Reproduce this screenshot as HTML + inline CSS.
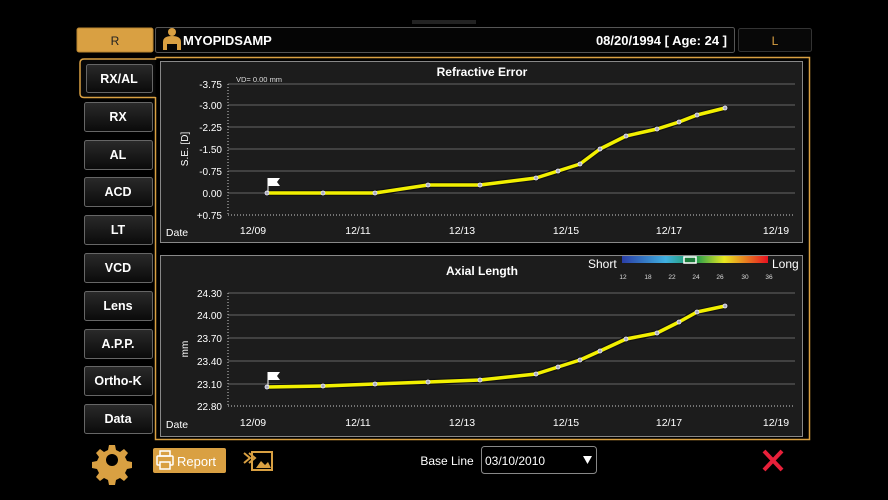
<!DOCTYPE html>
<html><head><meta charset="utf-8"><style>
html,body{margin:0;padding:0;background:#000;width:888px;height:500px;overflow:hidden}
svg{display:block}
text{font-family:"Liberation Sans",sans-serif}
</style></head><body>
<svg width="888" height="500" viewBox="0 0 888 500" xmlns="http://www.w3.org/2000/svg">
<defs>
<linearGradient id="btn" x1="0" y1="0" x2="0" y2="1"><stop offset="0" stop-color="#2a2a2a"/><stop offset="1" stop-color="#0a0a0a"/></linearGradient>
<linearGradient id="cb" x1="0" y1="0" x2="1" y2="0"><stop offset="0" stop-color="#2a3ea8"/><stop offset="0.3" stop-color="#3fb0e0"/><stop offset="0.5" stop-color="#1a9a50"/><stop offset="0.7" stop-color="#e8e820"/><stop offset="1" stop-color="#e81020"/></linearGradient>
</defs>
<rect width="888" height="500" fill="#000"/>
<rect x="412" y="20" width="64" height="4" fill="#222"/>
<!-- R -->
<rect x="77" y="28" width="76" height="24" rx="2" fill="#d9a042" stroke="#b88530"/>
<text x="115" y="45" font-size="12" text-anchor="middle" fill="#222">R</text>
<!-- header -->
<rect x="155.5" y="27.5" width="579" height="25" rx="2" fill="#050505" stroke="#555"/>
<circle cx="172" cy="32" r="4" fill="#d9a042"/>
<path d="M163 50 v-8 q0-6 9-6 q9 0 9 6 v8 h-4 v-6 h-10 v6z" fill="#d9a042"/>
<text x="183" y="45" font-size="13" font-weight="bold" fill="#fff">MYOPIDSAMP</text>
<text x="727" y="45" font-size="13" font-weight="bold" fill="#fff" text-anchor="end">08/20/1994 [ Age: 24 ]</text>
<rect x="738.5" y="28.5" width="73" height="23" rx="2" fill="#080808" stroke="#333"/>
<text x="775" y="45" font-size="12" text-anchor="middle" fill="#d9a042">L</text>
<!-- main orange frame -->
<path d="M155.5 57.5 H809.5 V439.5 H155.5 V97 M155.5 57.5 V60" fill="none" stroke="#d9a042" stroke-width="1.5"/>
<path d="M155.5 97.5 H84 q-4 0-4-4 V63 q0-4 4-4 H155.5" fill="#080808" stroke="#d9a042" stroke-width="1.5"/>
<rect x="86.5" y="64.5" width="66" height="28" rx="2" fill="url(#btn)" stroke="#666"/>
<text x="119" y="83" font-size="12.5" font-weight="bold" text-anchor="middle" fill="#fff">RX/AL</text>
<g font-size="12.5" font-weight="bold" text-anchor="middle" fill="#fff">
<rect x="84.5" y="102.5" width="68" height="29" rx="2" fill="url(#btn)" stroke="#666"/><text x="118" y="121">RX</text>
<rect x="84.5" y="140.5" width="68" height="29" rx="2" fill="url(#btn)" stroke="#666"/><text x="118" y="159">AL</text>
<rect x="84.5" y="177.5" width="68" height="29" rx="2" fill="url(#btn)" stroke="#666"/><text x="118" y="196">ACD</text>
<rect x="84.5" y="215.5" width="68" height="29" rx="2" fill="url(#btn)" stroke="#666"/><text x="118" y="234">LT</text>
<rect x="84.5" y="253.5" width="68" height="29" rx="2" fill="url(#btn)" stroke="#666"/><text x="118" y="272">VCD</text>
<rect x="84.5" y="291.5" width="68" height="29" rx="2" fill="url(#btn)" stroke="#666"/><text x="118" y="310">Lens</text>
<rect x="84.5" y="329.5" width="68" height="29" rx="2" fill="url(#btn)" stroke="#666"/><text x="118" y="348">A.P.P.</text>
<rect x="84.5" y="366.5" width="68" height="29" rx="2" fill="url(#btn)" stroke="#666"/><text x="118" y="385">Ortho-K</text>
<rect x="84.5" y="404.5" width="68" height="29" rx="2" fill="url(#btn)" stroke="#666"/><text x="118" y="423">Data</text>
</g>
<!-- top chart -->
<rect x="160.5" y="61.5" width="642" height="181" fill="#1c1c1c" stroke="#888"/>
<text x="482" y="76" font-size="12" font-weight="bold" text-anchor="middle" fill="#fff">Refractive Error</text>
<text x="236" y="82" font-size="7.5" fill="#ddd">VD= 0.00 mm</text>
<g stroke="#666" stroke-width="1">
<line x1="228" y1="84" x2="795" y2="84"/><line x1="228" y1="105" x2="795" y2="105"/><line x1="228" y1="127" x2="795" y2="127"/><line x1="228" y1="149" x2="795" y2="149"/><line x1="228" y1="171" x2="795" y2="171"/><line x1="228" y1="193" x2="795" y2="193"/>
</g>
<line x1="228" y1="84" x2="228" y2="215" stroke="#ccc" stroke-dasharray="1,2"/>
<line x1="228" y1="215" x2="795" y2="215" stroke="#ccc" stroke-dasharray="1,2"/>
<g font-size="10" fill="#fff" text-anchor="end">
<text x="222" y="88">-3.75</text><text x="222" y="109">-3.00</text><text x="222" y="131">-2.25</text><text x="222" y="153">-1.50</text><text x="222" y="175">-0.75</text><text x="222" y="197">0.00</text><text x="222" y="219">+0.75</text>
</g>
<text transform="translate(188,149) rotate(-90)" font-size="10" fill="#fff" text-anchor="middle">S.E. [D]</text>
<g font-size="10.5" fill="#fff" text-anchor="middle">
<text x="177" y="236">Date</text><text x="253" y="234">12/09</text><text x="358" y="234">12/11</text><text x="462" y="234">12/13</text><text x="566" y="234">12/15</text><text x="669" y="234">12/17</text><text x="776" y="234">12/19</text>
</g>
<polyline points="267,193 323,193 375,193 428,185 480,185 536,178 558,171 580,164 600,149 626,136 657,129 679,122 697,115 725,108" fill="none" stroke="#111" stroke-width="6" stroke-linejoin="round"/>
<polyline points="267,193 323,193 375,193 428,185 480,185 536,178 558,171 580,164 600,149 626,136 657,129 679,122 697,115 725,108" fill="none" stroke="#f2f000" stroke-width="3.5" stroke-linejoin="round"/>
<g fill="#aab" stroke="#eef" stroke-width="0.8">
<circle cx="267" cy="193" r="2"/><circle cx="323" cy="193" r="2"/><circle cx="375" cy="193" r="2"/><circle cx="428" cy="185" r="2"/><circle cx="480" cy="185" r="2"/><circle cx="536" cy="178" r="2"/><circle cx="558" cy="171" r="2"/><circle cx="580" cy="164" r="2"/><circle cx="600" cy="149" r="2"/><circle cx="626" cy="136" r="2"/><circle cx="657" cy="129" r="2"/><circle cx="679" cy="122" r="2"/><circle cx="697" cy="115" r="2"/><circle cx="725" cy="108" r="2"/>
</g>
<line x1="268" y1="178" x2="268" y2="192" stroke="#fff"/><path d="M268 178 h12 l-3 4 l3 4 h-12z" fill="#fff"/>
<!-- bottom chart -->
<rect x="160.5" y="255.5" width="642" height="181" fill="#1c1c1c" stroke="#888"/>
<text x="482" y="275" font-size="12" font-weight="bold" text-anchor="middle" fill="#fff">Axial Length</text>
<text x="588" y="268" font-size="12" fill="#fff">Short</text>
<rect x="622" y="256" width="146" height="7" fill="url(#cb)"/>
<rect x="684" y="257" width="12" height="6" fill="#1a7a3a" stroke="#fff" stroke-width="1.5"/>
<text x="772" y="268" font-size="12" fill="#fff">Long</text>
<g font-size="6.5" fill="#ddd" text-anchor="middle"><text x="623" y="279">12</text><text x="648" y="279">18</text><text x="672" y="279">22</text><text x="696" y="279">24</text><text x="720" y="279">26</text><text x="745" y="279">30</text><text x="769" y="279">36</text></g>
<g stroke="#666"><line x1="228" y1="293" x2="795" y2="293"/><line x1="228" y1="315" x2="795" y2="315"/><line x1="228" y1="338" x2="795" y2="338"/><line x1="228" y1="361" x2="795" y2="361"/><line x1="228" y1="384" x2="795" y2="384"/></g>
<line x1="228" y1="293" x2="228" y2="406" stroke="#ccc" stroke-dasharray="1,2"/>
<line x1="228" y1="406" x2="795" y2="406" stroke="#ccc" stroke-dasharray="1,2"/>
<g font-size="10" fill="#fff" text-anchor="end">
<text x="222" y="297">24.30</text><text x="222" y="319">24.00</text><text x="222" y="342">23.70</text><text x="222" y="365">23.40</text><text x="222" y="388">23.10</text><text x="222" y="410">22.80</text>
</g>
<text transform="translate(188,349) rotate(-90)" font-size="10" fill="#fff" text-anchor="middle">mm</text>
<g font-size="10.5" fill="#fff" text-anchor="middle">
<text x="177" y="428">Date</text><text x="253" y="426">12/09</text><text x="358" y="426">12/11</text><text x="462" y="426">12/13</text><text x="566" y="426">12/15</text><text x="669" y="426">12/17</text><text x="776" y="426">12/19</text>
</g>
<polyline points="267,387 323,386 375,384 428,382 480,380 536,374 558,367 580,360 600,351 626,339 657,333 679,322 697,312 725,306" fill="none" stroke="#111" stroke-width="6" stroke-linejoin="round"/>
<polyline points="267,387 323,386 375,384 428,382 480,380 536,374 558,367 580,360 600,351 626,339 657,333 679,322 697,312 725,306" fill="none" stroke="#f2f000" stroke-width="3.5" stroke-linejoin="round"/>
<g fill="#aab" stroke="#eef" stroke-width="0.8">
<circle cx="267" cy="387" r="2"/><circle cx="323" cy="386" r="2"/><circle cx="375" cy="384" r="2"/><circle cx="428" cy="382" r="2"/><circle cx="480" cy="380" r="2"/><circle cx="536" cy="374" r="2"/><circle cx="558" cy="367" r="2"/><circle cx="580" cy="360" r="2"/><circle cx="600" cy="351" r="2"/><circle cx="626" cy="339" r="2"/><circle cx="657" cy="333" r="2"/><circle cx="679" cy="322" r="2"/><circle cx="697" cy="312" r="2"/><circle cx="725" cy="306" r="2"/>
</g>
<line x1="268" y1="372" x2="268" y2="386" stroke="#fff"/><path d="M268 372 h12 l-3 4 l3 4 h-12z" fill="#fff"/>
<!-- bottom toolbar -->
<g transform="translate(112,460)">
<path d="M-3,-15 h6 l1,5 l4,2 l4,-3 l4,4 l-3,4 l2,4 l5,1 v6 l-5,1 l-2,4 l3,4 l-4,4 l-4,-3 l-4,2 l-1,5 h-6 l-1,-5 l-4,-2 l-4,3 l-4,-4 l3,-4 l-2,-4 l-5,-1 v-6 l5,-1 l2,-4 l-3,-4 l4,-4 l4,3 l4,-2z" fill="#d9a042"/>
<circle r="6" fill="#000"/>
</g>
<rect x="153" y="448" width="73" height="25" rx="2" fill="#d9a042"/>
<rect x="157" y="456" width="16" height="9" rx="1" fill="none" stroke="#fff" stroke-width="1.5"/>
<rect x="160" y="451" width="10" height="5" fill="none" stroke="#fff" stroke-width="1.5"/>
<rect x="160" y="462" width="10" height="7" fill="#d9a042" stroke="#fff" stroke-width="1.5"/>
<text x="177" y="466" font-size="13" fill="#fff">Report</text>
<rect x="252" y="452" width="20" height="18" fill="none" stroke="#d9a042" stroke-width="2"/>
<path d="M244 453 l6 5 l-6 5 M249 453 l6 5 l-6 5" fill="none" stroke="#d9a042" stroke-width="2"/>
<path d="M256 468 l5-7 l4 4 l3-3 l3 6z" fill="#d9a042"/>
<text x="447" y="465" font-size="12" fill="#fff" text-anchor="middle">Base Line</text>
<rect x="481.5" y="446.5" width="115" height="27" rx="3" fill="#000" stroke="#888"/>
<text x="485" y="465" font-size="12" fill="#fff">03/10/2010</text>
<path d="M583 456 h9 l-4.5 8z" fill="#fff"/>
<path d="M764 451 l18 19 M782 451 l-18 19" stroke="#e8203a" stroke-width="4"/>
</svg>
</body></html>
